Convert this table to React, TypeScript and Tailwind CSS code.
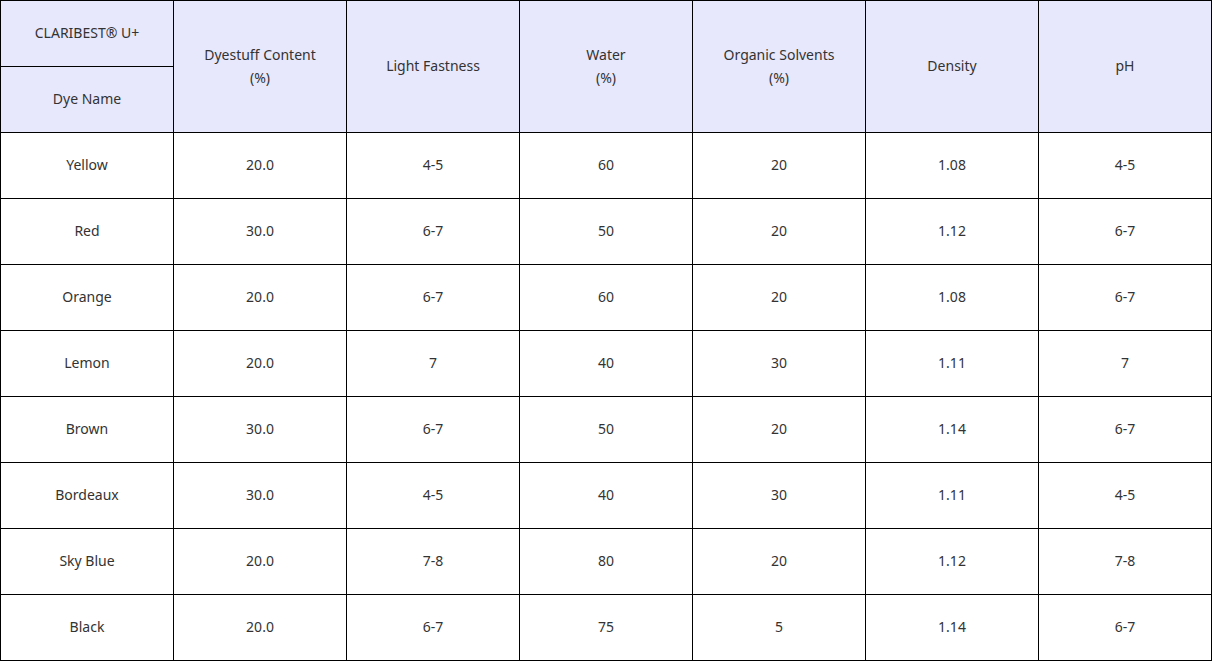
const rows = [
  ["Yellow", "20.0", "4-5", "60", "20", "1.08", "4-5"],
  ["Red", "30.0", "6-7", "50", "20", "1.12", "6-7"],
  ["Orange", "20.0", "6-7", "60", "20", "1.08", "6-7"],
  ["Lemon", "20.0", "7", "40", "30", "1.11", "7"],
  ["Brown", "30.0", "6-7", "50", "20", "1.14", "6-7"],
  ["Bordeaux", "30.0", "4-5", "40", "30", "1.11", "4-5"],
  ["Sky Blue", "20.0", "7-8", "80", "20", "1.12", "7-8"],
  ["Black", "20.0", "6-7", "75", "5", "1.14", "6-7"],
];

export default function App() {
  const th = "border border-black bg-[#e8e8fc] font-normal text-center align-middle p-0 pb-[2px]";
  const td = "border border-black text-center align-middle p-0 pb-[2px] h-[66px]";
  return (
    <div className="bg-white w-[1213px] h-[662px] font-['Noto_Sans',sans-serif] text-[14px] leading-[23px] text-[#333]">
      <table className="table-fixed border-collapse w-[1212px]">
        <colgroup>
          {Array.from({ length: 7 }).map((_, i) => (
            <col key={i} className="w-[173px]" />
          ))}
        </colgroup>
        <thead>
          <tr className="h-[66px]">
            <th className={th}>CLARIBEST® U+</th>
            <th className={th} rowSpan={2}>
              Dyestuff Content
              <br />
              (%)
            </th>
            <th className={th} rowSpan={2}>Light Fastness</th>
            <th className={th} rowSpan={2}>
              Water
              <br />
              (%)
            </th>
            <th className={th} rowSpan={2}>
              Organic Solvents
              <br />
              (%)
            </th>
            <th className={th} rowSpan={2}>Density</th>
            <th className={th} rowSpan={2}>pH</th>
          </tr>
          <tr className="h-[66px]">
            <th className={th}>Dye Name</th>
          </tr>
        </thead>
        <tbody>
          {rows.map((r) => (
            <tr key={r[0]}>
              {r.map((c, i) => (
                <td key={i} className={td}>
                  {c}
                </td>
              ))}
            </tr>
          ))}
        </tbody>
      </table>
    </div>
  );
}
